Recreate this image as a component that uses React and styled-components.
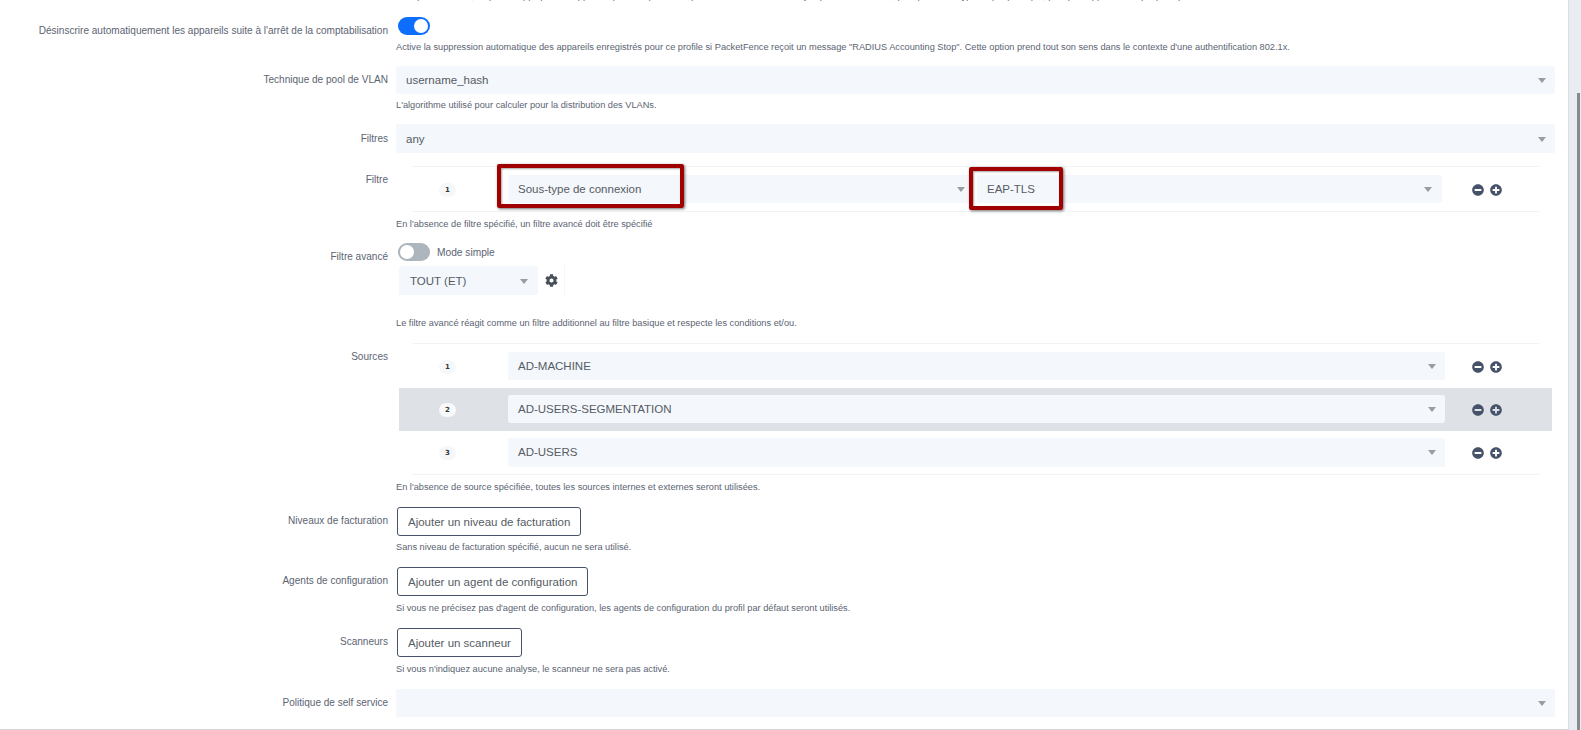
import React from 'react';
import styled, { createGlobalStyle } from 'styled-components';
import { FaMinusCircle, FaPlusCircle, FaCog } from 'react-icons/fa';

const Global = createGlobalStyle`
    html, body {
        margin: 0;
        padding: 0;
        height: 730px;
        overflow: hidden;
        background: #fff;
        font-family: "Liberation Sans", Arial, sans-serif;
    }
`

const Page = styled.div`
    display: flex;
    height: 730px;
`

const Main = styled.main`
    flex: 1;
    height: 729px;
    overflow: hidden;
    border-right: 1px solid #dcdee2;
    border-bottom: 1px solid #d4d6d9;
`

const Track = styled.div`
    width: 12px;
    background: #e9edf3;
    padding: 93px 1px 0 8px;
    box-sizing: border-box;
`

const Thumb = styled.div`
    height: 100%;
    background: #868b92;
`

const Form = styled.form`
    margin-top: -11px;
`

const Row = styled.div`
    display: grid;
    grid-template-columns: 388px 1159px;
    column-gap: 8px;
    margin-bottom: ${props => props.$gap}px;
`

const Label = styled.label`
    text-align: right;
    font-size: 10.05px;
    line-height: 14px;
    color: #5b6472;
    padding-top: ${props => props.$top}px;
`

const Help = styled.div`
    font-size: 9.23px;
    line-height: 14px;
    color: #5b6472;
    margin-top: ${props => props.$top}px;
    white-space: nowrap;
`

const Select = styled.div`
    position: relative;
    display: flex;
    align-items: center;
    height: ${props => props.$height || 28.4}px;
    padding: 0 10px;
    box-sizing: border-box;
    background: #f4f7fb;
    border-radius: 2px;
    font-size: 11.5px;
    color: #555c64;

    &::after {
        content: "";
        position: absolute;
        right: ${props => props.$caret || 9}px;
        top: 50%;
        margin-top: -2px;
        border-style: solid;
        border-width: 5px 4.5px 0 4.5px;
        border-color: #9a9ca0 transparent transparent transparent;
    }
`

const Switch = styled.div`
    width: 32px;
    height: 18px;
    margin-left: 2px;
    border-radius: 9px;
    position: relative;
    background: ${props => props.$on ? '#0d6efd' : '#adb5bd'};

    &::after {
        content: "";
        position: absolute;
        top: 2px;
        left: ${props => props.$on ? '16px' : '2px'};
        width: 14px;
        height: 14px;
        border-radius: 50%;
        background: #fff;
    }
`

const SwitchLine = styled.div`
    display: flex;
    align-items: center;
    gap: 7px;
    font-size: 10.2px;
    color: #5b6472;
`

const List = styled.div`
    margin: 0 3px;
`

const Rule = styled.div`
    height: 1px;
    margin: 0 13px;
    background: #f1f3f6;
`

const ListRow = styled.div`
    display: grid;
    grid-template-columns: ${props => props.$columns};
    align-items: center;
    height: ${props => props.$height || 43.33}px;
    background: ${props => props.$active ? '#dee1e6' : 'transparent'};
`

const Badge = styled.span`
    justify-self: start;
    margin: 2px 0 0 40px;
    width: 17px;
    height: 14px;
    border-radius: 7px;
    background: ${props => props.$active ? '#f8f9fa' : '#f6f7f9'};
    display: flex;
    align-items: center;
    justify-content: center;
    font-family: "DejaVu Sans", sans-serif;
    font-weight: 700;
    font-size: 7px;
    color: #343a40;
`

const Actions = styled.div`
    display: flex;
    gap: 6px;
    margin-top: 2px;
    padding-left: ${props => props.$left}px;
    font-size: 12px;
    color: #465269;

    svg {
        display: block;
    }
`

const Annotation = styled.span`
    position: absolute;
    left: ${props => props.$left}px;
    top: ${props => props.$top}px;
    width: ${props => props.$width}px;
    height: ${props => props.$height}px;
    box-sizing: border-box;
    border: 4px solid #a00000;
    border-radius: 2px;
    box-shadow: 1px 1px 3px rgba(0, 0, 0, 0.55), inset 1px 1px 2px rgba(0, 0, 0, 0.35);
`

const FilterLine = styled.div`
    display: flex;
    align-items: center;
    margin: 3px 0 0 3px;
`

const FieldSelect = styled(Select)`
    margin-right: 3px;
`

const MatchSelect = styled(Select)`
    width: 139px;
    padding-left: 11px;
`

const GearBox = styled.div`
    display: flex;
    align-items: center;
    height: 33px;
    padding: 0 6px 0 7px;
    font-size: 13px;
    color: #484f57;
    border-right: 1px solid #f6f7f9;
`

const OutlineButton = styled.button`
    display: block;
    height: 29px;
    padding: 0 10px;
    margin-left: 1px;
    background: #fff;
    border: 1px solid #465269;
    border-radius: 3px;
    font-family: inherit;
    font-size: 11.5px;
    color: #555c64;
`

const RowActions = ({ left }) => (
    <Actions $left={left}>
        <FaMinusCircle />
        <FaPlusCircle />
    </Actions>
)

const sources = ['AD-MACHINE', 'AD-USERS-SEGMENTATION', 'AD-USERS'];

const App = () => (
    <Page>
        <Global />
        <Main>
            <Form>
                <Row $gap={14}>
                    <span />
                    <Help $top={0}>Lorsqu'il est activé, ce profil s'applique aux appareils pour lesquels la requête de connexion a été reçue par PacketFence, quel que soit le type de périphérique, puis par rapport à chaque politique.</Help>
                </Row>

                <Row $gap={12}>
                    <Label $top={7}>Désinscrire automatiquement les appareils suite à l'arrêt de la comptabilisation</Label>
                    <div>
                        <Switch $on />
                        <Help $top={5}>Active la suppression automatique des appareils enregistrés pour ce profile si PacketFence reçoit un message "RADIUS Accounting Stop". Cette option prend tout son sens dans le contexte d'une authentification 802.1x.</Help>
                    </div>
                </Row>

                <Row $gap={12}>
                    <Label $top={7}>Technique de pool de VLAN</Label>
                    <div>
                        <Select>username_hash</Select>
                        <Help $top={4}>L'algorithme utilisé pour calculer pour la distribution des VLANs.</Help>
                    </div>
                </Row>

                <Row $gap={13}>
                    <Label $top={8}>Filtres</Label>
                    <Select>any</Select>
                </Row>

                <Row $gap={12}>
                    <Label $top={7}>Filtre</Label>
                    <div>
                        <List>
                            <Rule />
                            <ListRow $columns="109px 469px 465px 1fr" $height={44.4}>
                                <Badge>1</Badge>
                                <FieldSelect>
                                    Sous-type de connexion
                                    <Annotation $left={-11} $top={-11} $width={187} $height={44} />
                                </FieldSelect>
                                <Select $caret={10}>
                                    EAP-TLS
                                    <Annotation $left={-8} $top={-8} $width={94} $height={43} />
                                </Select>
                                <RowActions left={30} />
                            </ListRow>
                            <Rule />
                        </List>
                        <Help $top={5}>En l'absence de filtre spécifié, un filtre avancé doit être spécifié</Help>
                    </div>
                </Row>

                <Row $gap={13}>
                    <Label $top={7}>Filtre avancé</Label>
                    <div>
                        <SwitchLine>
                            <Switch />
                            Mode simple
                        </SwitchLine>
                        <FilterLine>
                            <MatchSelect $caret={10}>TOUT (ET)</MatchSelect>
                            <GearBox><FaCog /></GearBox>
                        </FilterLine>
                        <Help $top={19}>Le filtre avancé réagit comme un filtre additionnel au filtre basique et respecte les conditions et/ou.</Help>
                    </div>
                </Row>

                <Row $gap={13}>
                    <Label $top={7}>Sources</Label>
                    <div>
                        <List>
                            <Rule />
                            {sources.map((source, index) => (
                                <ListRow key={source} $columns="109px 937px 1fr" $active={index === 1}>
                                    <Badge $active={index === 1}>{index + 1}</Badge>
                                    <Select>{source}</Select>
                                    <RowActions left={27} />
                                </ListRow>
                            ))}
                            <Rule />
                        </List>
                        <Help $top={5}>En l'absence de source spécifiée, toutes les sources internes et externes seront utilisées.</Help>
                    </div>
                </Row>

                <Row $gap={13}>
                    <Label $top={7}>Niveaux de facturation</Label>
                    <div>
                        <OutlineButton type="button">Ajouter un niveau de facturation</OutlineButton>
                        <Help $top={4}>Sans niveau de facturation spécifié, aucun ne sera utilisé.</Help>
                    </div>
                </Row>

                <Row $gap={13}>
                    <Label $top={7}>Agents de configuration</Label>
                    <div>
                        <OutlineButton type="button">Ajouter un agent de configuration</OutlineButton>
                        <Help $top={5}>Si vous ne précisez pas d'agent de configuration, les agents de configuration du profil par défaut seront utilisés.</Help>
                    </div>
                </Row>

                <Row $gap={13}>
                    <Label $top={7}>Scanneurs</Label>
                    <div>
                        <OutlineButton type="button">Ajouter un scanneur</OutlineButton>
                        <Help $top={5}>Si vous n'indiquez aucune analyse, le scanneur ne sera pas activé.</Help>
                    </div>
                </Row>

                <Row $gap={0}>
                    <Label $top={7}>Politique de self service</Label>
                    <Select $height={28} />
                </Row>
            </Form>
        </Main>
        <Track>
            <Thumb />
        </Track>
    </Page>
);

export default App;
